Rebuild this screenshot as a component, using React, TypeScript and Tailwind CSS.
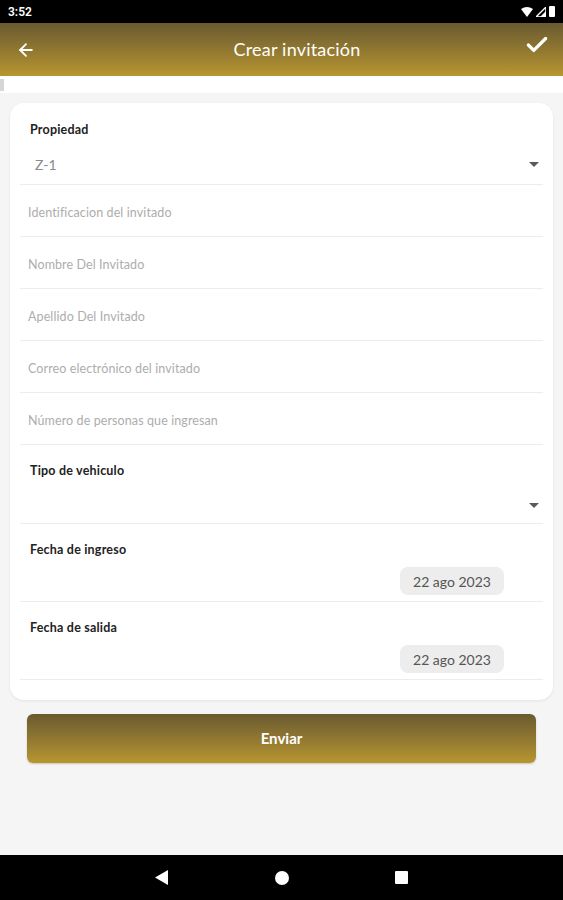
import { ArrowLeft, Check } from "lucide-react";

const font = { fontFamily: "Lato, 'Open Sans', sans-serif" };

function Divider() {
  return <div className="h-px bg-[#ececec] mx-[10px]" />;
}

function Caret() {
  return (
    <svg width="10" height="6" viewBox="0 0 10 6" className="text-[#5a5a5a]">
      <path d="M0 0 L10 0 L5 5 Z" fill="currentColor" />
    </svg>
  );
}

function TextRow({ placeholder }: { placeholder: string }) {
  return (
    <>
      <div className="h-[51px] flex items-center pl-[18px] pt-[6px] text-[12.5px] text-[#adadad] tracking-[0.1px]">
        {placeholder}
      </div>
      <Divider />
    </>
  );
}

function Label({ children }: { children: string }) {
  return <div className="text-[12.5px] font-bold text-[#222] leading-[14px] tracking-[0.2px]">{children}</div>;
}

function DateRow({ label }: { label: string }) {
  return (
    <>
      <div className="h-[77px] pt-[19px] pl-[20px] pr-[49px]">
        <Label>{label}</Label>
        <div className="flex justify-end mt-[10px]">
          <div className="h-[28px] w-[104px] rounded-[8px] bg-[#ededed] flex items-center justify-center text-[14px] text-[#555]">
            22 ago 2023
          </div>
        </div>
      </div>
      <Divider />
    </>
  );
}

export default function App() {
  return (
    <div className="w-[563px] h-[900px] flex flex-col bg-[#f5f5f5]" style={font}>
      <div className="h-[23px] bg-black flex items-center justify-between px-[8px] text-white">
        <span className="text-[12px] font-semibold" style={{ fontFamily: "Roboto, sans-serif" }}>3:52</span>
        <div className="flex items-center gap-[3px]">
          <svg width="12" height="10" viewBox="0 0 12 10">
            <path d="M0 2 Q6 -2 12 2 L6 10 Z" fill="white" />
          </svg>
          <svg width="10" height="10" viewBox="0 0 10 10">
            <path d="M10 0 L10 10 L0 10 Z" fill="none" stroke="white" strokeWidth="1.4" />
            <path d="M10 4 L10 10 L4 10 Z" fill="white" />
          </svg>
          <div className="w-[6px] h-[11px] bg-white rounded-[1px]" />
        </div>
      </div>
      <div className="h-[53px] bg-gradient-to-b from-[#6a5a2f] to-[#b8962f] flex items-center px-[16px] text-white">
        <ArrowLeft size={20} strokeWidth={2.2} />
        <div className="flex-1 text-center text-[18px] pl-[34px] tracking-[0.2px]">Crear invitación</div>
        <Check size={26} strokeWidth={3} className="-mr-[3px] -mt-[10px]" />
      </div>
      <div className="h-[17px] bg-white flex items-center">
        <div className="w-[4px] h-[12px] bg-[#d6d6d6]" />
      </div>
      <div className="px-[10px] pt-[10px]">
        <div className="bg-white rounded-[14px] shadow-[0_1px_3px_rgba(0,0,0,0.08)] pb-[20px]">
          <div className="h-[81px] pt-[20px] pl-[20px] pr-[14px]">
            <Label>Propiedad</Label>
            <div className="flex items-center justify-between mt-[17px]">
              <span className="text-[14px] text-[#8a8a8a] pl-[5px]">Z-1</span>
              <Caret />
            </div>
          </div>
          <Divider />
          <TextRow placeholder="Identificacion del invitado" />
          <TextRow placeholder="Nombre Del Invitado" />
          <TextRow placeholder="Apellido Del Invitado" />
          <TextRow placeholder="Correo electrónico del invitado" />
          <TextRow placeholder="Número de personas que ingresan" />
          <div className="h-[78px] pt-[19px] pl-[20px] pr-[14px]">
            <Label>Tipo de vehiculo</Label>
            <div className="flex justify-end mt-[25px]">
              <Caret />
            </div>
          </div>
          <Divider />
          <DateRow label="Fecha de ingreso" />
          <DateRow label="Fecha de salida" />
        </div>
      </div>
      <div className="px-[27px] pt-[14px]">
        <button className="w-full h-[49px] rounded-[6px] bg-gradient-to-b from-[#6a5a2f] to-[#b8962f] text-white text-[15px] font-bold shadow-[0_1px_2px_rgba(0,0,0,0.2)]">
          Enviar
        </button>
      </div>
      <div className="flex-1" />
      <div className="h-[45px] bg-black flex items-center justify-center gap-[106px]">
        <svg width="14" height="15" viewBox="0 0 14 15">
          <path d="M13 0 L13 15 L0 7.5 Z" fill="white" />
        </svg>
        <div className="w-[14px] h-[14px] rounded-full bg-white" />
        <div className="w-[13px] h-[13px] rounded-[1px] bg-white" />
      </div>
    </div>
  );
}
